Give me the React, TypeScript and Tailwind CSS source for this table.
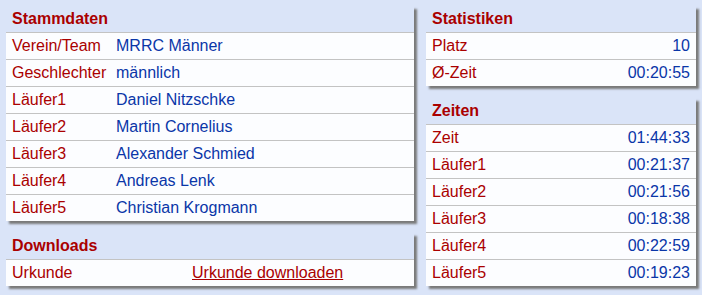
const stammdaten: [string, string][] = [
  ['Verein/Team', 'MRRC Männer'],
  ['Geschlechter', 'männlich'],
  ['Läufer1', 'Daniel Nitzschke'],
  ['Läufer2', 'Martin Cornelius'],
  ['Läufer3', 'Alexander Schmied'],
  ['Läufer4', 'Andreas Lenk'],
  ['Läufer5', 'Christian Krogmann'],
]

const statistiken: [string, string][] = [
  ['Platz', '10'],
  ['Ø-Zeit', '00:20:55'],
]

const zeiten: [string, string][] = [
  ['Zeit', '01:44:33'],
  ['Läufer1', '00:21:37'],
  ['Läufer2', '00:21:56'],
  ['Läufer3', '00:18:38'],
  ['Läufer4', '00:22:59'],
  ['Läufer5', '00:19:23'],
]

function Panel({ title, children }: { title: string; children: React.ReactNode }) {
  return (
    <div className="shadow-[3px_3px_2px_#7a7a7a]">
      <div className="h-[26px] flex items-center px-[6px] font-bold text-[#aa0000]">{title}</div>
      {children}
    </div>
  )
}

function Row({ children }: { children: React.ReactNode }) {
  return (
    <div className="h-[27px] border-t border-[#c3c3c3] bg-[#fcfdff] flex items-center px-[6px]">
      {children}
    </div>
  )
}

export default function App() {
  return (
    <div
      className="w-[702px] h-[295px] bg-[#dae4f8] p-[6px] flex gap-[12px] text-[16px] leading-none"
      style={{ fontFamily: '"Liberation Sans", Arial, sans-serif' }}
    >
      {/* Left column */}
      <div className="w-[408px] flex flex-col gap-[12px]">
        <Panel title="Stammdaten">
          {stammdaten.map(([label, value]) => (
            <Row key={label}>
              <span className="w-[104px] text-[#aa0000]">{label}</span>
              <span className="text-[#0a36a8]">{value}</span>
            </Row>
          ))}
        </Panel>
        <Panel title="Downloads">
          <Row>
            <span className="w-[180px] text-[#aa0000]">Urkunde</span>
            <a href="#" className="text-[#aa0000] underline">Urkunde downloaden</a>
          </Row>
        </Panel>
      </div>

      {/* Right column */}
      <div className="w-[270px] flex flex-col gap-[12px]">
        <Panel title="Statistiken">
          {statistiken.map(([label, value]) => (
            <Row key={label}>
              <span className="flex-1 text-[#aa0000]">{label}</span>
              <span className="text-[#0a36a8]">{value}</span>
            </Row>
          ))}
        </Panel>
        <Panel title="Zeiten">
          {zeiten.map(([label, value]) => (
            <Row key={label}>
              <span className="flex-1 text-[#aa0000]">{label}</span>
              <span className="text-[#0a36a8]">{value}</span>
            </Row>
          ))}
        </Panel>
      </div>
    </div>
  )
}
